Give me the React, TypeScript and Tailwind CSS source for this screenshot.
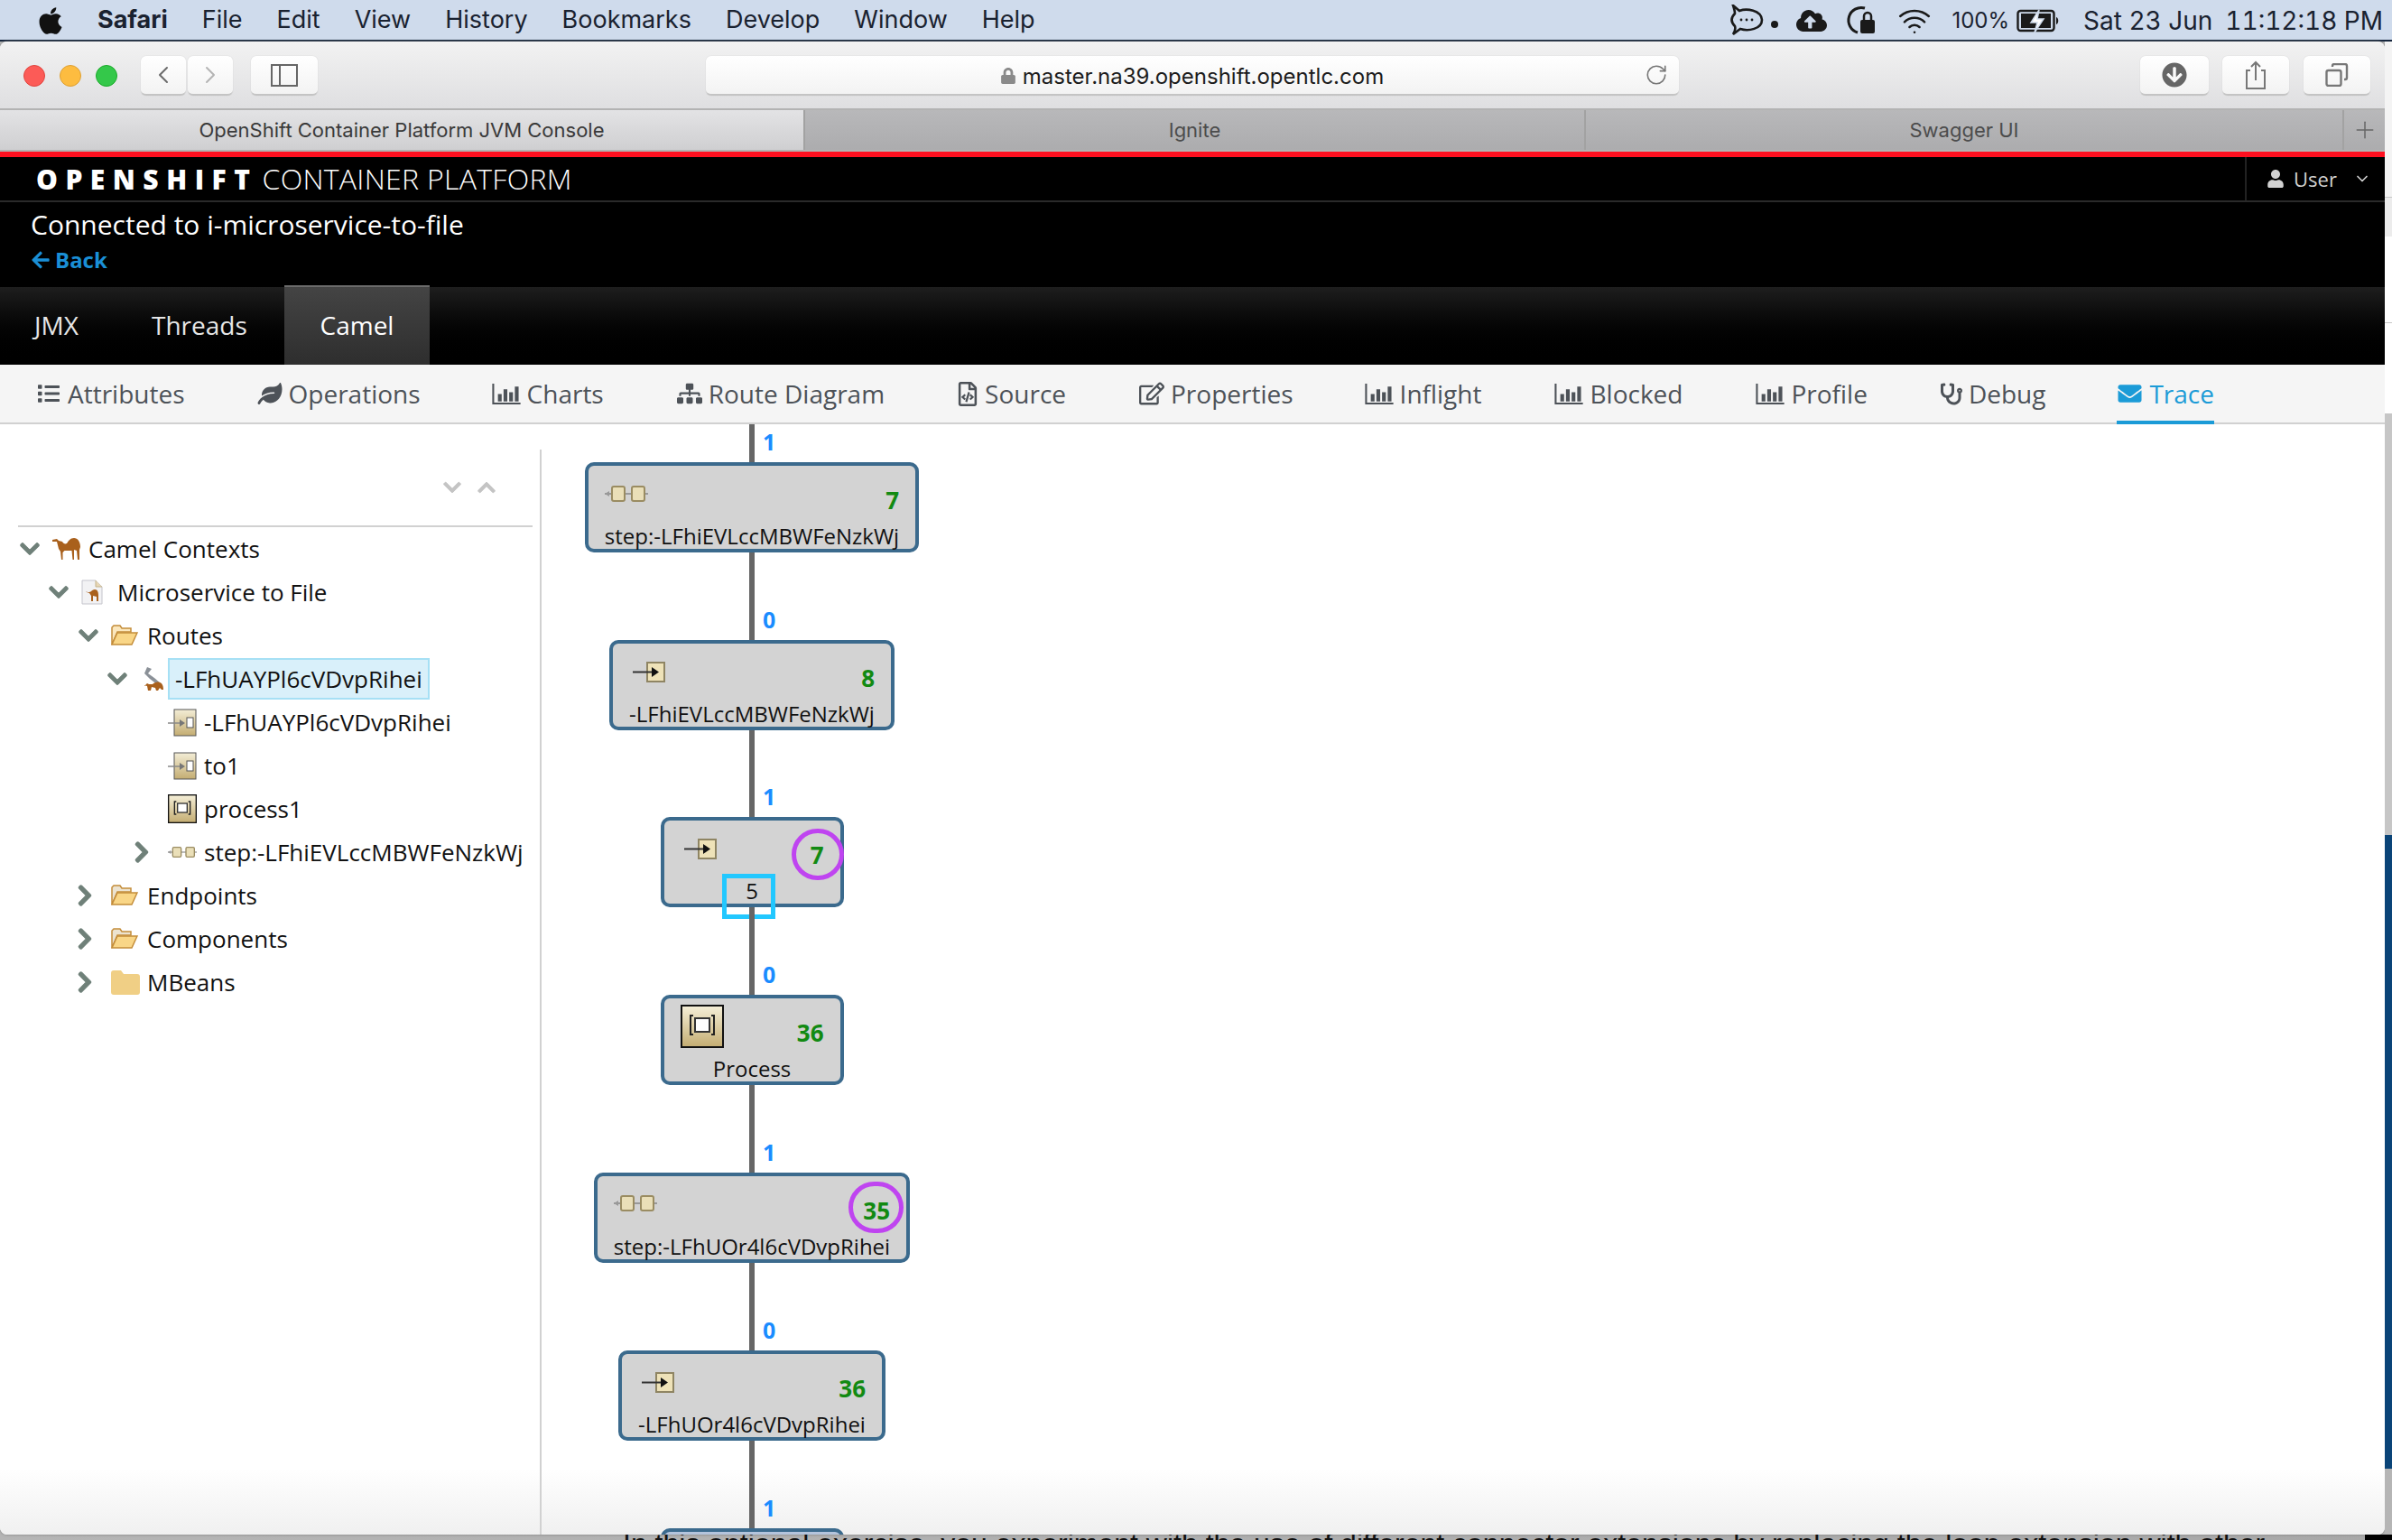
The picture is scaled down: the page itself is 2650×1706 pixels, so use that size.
import { FaApple, FaArrowCircleDown, FaArrowLeft, FaChevronDown, FaChevronRight, FaChevronUp, FaCloudUploadAlt, FaEnvelope, FaLeaf, FaList, FaLock, FaRegEdit, FaRegFileCode, FaSitemap, FaStethoscope, FaUser } from 'react-icons/fa';
import { ChevronDown, ChevronLeft, ChevronRight, Plus, RotateCw, Wifi } from 'lucide-react';
import type { ReactNode } from 'react';

const menuItems = ['File', 'Edit', 'View', 'History', 'Bookmarks', 'Develop', 'Window', 'Help'];

function BarIcon() {
  return (
    <svg width="32" height="25" viewBox="0 0 30 24" fill="currentColor">
      <path d="M0 1h2v20h28v2H0z" />
      <path d="M6 12h4v8H6zM12 7h4v13h-4zM18 10h4v10h-4zM24 4h4v16h-4z" />
    </svg>
  );
}

function StepIcon({ width = 48, height = 20 }: { width?: number; height?: number }) {
  return (
    <svg width={width} height={height} viewBox="0 0 48 20">
      <path d="M0 10h48" stroke="#999" strokeWidth="2" />
      <path d="M0 10l5-3v6z" fill="#999" />
      <rect x="8" y="2" width="14" height="16" rx="2" fill="#eadfb8" stroke="#9a8c62" strokeWidth="2" />
      <rect x="30" y="2" width="14" height="16" rx="2" fill="#eadfb8" stroke="#9a8c62" strokeWidth="2" />
    </svg>
  );
}

function EndpointIcon() {
  return (
    <svg width="36" height="23" viewBox="0 0 36 23">
      <rect x="16" y="1" width="19" height="21" fill="#eee2b8" stroke="#8f8563" strokeWidth="2" />
      <path d="M0 11.5h22" stroke="#333" strokeWidth="2" />
      <path d="M21 6l8 5.5-8 5.5z" fill="#111" />
    </svg>
  );
}

function ProcessIcon({ size }: { size: number }) {
  return (
    <svg width={size} height={size} viewBox="0 0 48 48">
      <defs>
        <linearGradient id="processFill" x1="0" y1="0" x2="0" y2="1">
          <stop offset="0" stopColor="#f5efd8" />
          <stop offset="1" stopColor="#c4ad72" />
        </linearGradient>
      </defs>
      <rect x="1" y="1" width="46" height="46" fill="url(#processFill)" stroke="#111" strokeWidth="2" />
      <path d="M14 12h-3v21h3M34 12h3v21h-3" fill="none" stroke="#222" strokeWidth="2" />
      <rect x="16" y="15" width="16" height="15" fill="#fff" stroke="#333" strokeWidth="2" />
    </svg>
  );
}

function TreeEndpointIcon() {
  return (
    <svg width="32" height="31" viewBox="0 0 32 31">
      <defs>
        <linearGradient id="treeFill" x1="0" y1="0" x2="0" y2="1">
          <stop offset="0" stopColor="#f3edd6" />
          <stop offset="1" stopColor="#c4ad72" />
        </linearGradient>
      </defs>
      <rect x="7" y="1" width="24" height="29" fill="url(#treeFill)" stroke="#555" />
      <rect x="21" y="10" width="7" height="11" fill="#fff" stroke="#555" />
      <path d="M0 16h14" stroke="#888" strokeWidth="1.5" />
      <path d="M13 12l6 4-6 4z" fill="#777" />
    </svg>
  );
}

function CamelIcon() {
  return (
    <svg width="32" height="24" viewBox="0 0 32 24" fill="#a9601c">
      <path d="M0 2l5-1 2 2 4 1c1 2 3 3 5 2 2-3 4-6 8-6s7 4 7 10l-1 3v11h-2l-1-10-3-1v11h-1.5l-1-10h-8l-2 2v8h-1.5l-1-9-2-3-2-8H3L0 4z" />
    </svg>
  );
}

function CamelFileIcon() {
  return (
    <svg width="24" height="28" viewBox="0 0 24 28">
      <path d="M1 1h15l7 7v19H1z" fill="#f2f2f4" stroke="#c4c4cc" />
      <path d="M16 1v7h7" fill="#e8d7b5" stroke="#c4b48c" />
      <path d="M5 13l2 1h2c2 0 3-3 6-3s4 3 4 6v7h-2v-5l-4-1v6h-2v-6l-2-3-3-1z" fill="#a9601c" />
    </svg>
  );
}

function RouteIcon() {
  return (
    <svg width="28" height="28" viewBox="0 0 28 28">
      <path d="M8 1l5 2-4 5 7 5 7 6-3 2-9-7-6-6z" fill="#8b9198" />
      <path d="M5 22l3-3 2 1h4c2-2 5-3 8-2s4 4 4 8h-2l-2-2-2 3h-2l-1-3-4-1-1 4H9l-1-5-3-1z" fill="#a9601c" />
    </svg>
  );
}

function FolderOpenIcon({ muted }: { muted?: boolean }) {
  return (
    <svg width="30" height="24" viewBox="0 0 30 24">
      <path d="M1 22V3l2-2h7l2 3h10v4H7z" fill={muted ? '#ece3d0' : '#fbe7bd'} stroke="#c48d3a" strokeWidth="1.5" />
      <path d="M1 22L7 9h22l-6 13z" fill="#f9d687" stroke="#c48d3a" strokeWidth="1.5" />
    </svg>
  );
}

function FolderIcon() {
  return (
    <svg width="32" height="27" viewBox="0 0 32 27" fill="#f0cf85">
      <path d="M0 3a3 3 0 013-3h8l3 4h15a3 3 0 013 3v17a3 3 0 01-3 3H3a3 3 0 01-3-3z" />
    </svg>
  );
}

function RocketChatIcon() {
  return (
    <svg width="38" height="36" viewBox="0 0 38 36" fill="none" stroke="#1a1a1a" strokeWidth="2.6">
      <path d="M4 1l7 6c8-3 24-1 25 10 0 10-15 13-24 10l-8 6c2-3 3-6 2-9-5-5-4-10 0-14 0-3-1-6-2-9z" />
      <circle cx="13" cy="17" r="1.4" fill="#1a1a1a" stroke="none" />
      <circle cx="19" cy="17" r="1.4" fill="#1a1a1a" stroke="none" />
      <circle cx="25" cy="17" r="1.4" fill="#1a1a1a" stroke="none" />
    </svg>
  );
}

function TimeMachineLockIcon() {
  return (
    <svg width="36" height="36" viewBox="0 0 36 36" fill="none">
      <path d="M22 4A14 14 0 1014 31" stroke="#1a1a1a" strokeWidth="3" />
      <rect x="17" y="17" width="16" height="15" rx="2" fill="#1a1a1a" />
      <path d="M21 18v-5a4 4 0 018 0v5" stroke="#1a1a1a" strokeWidth="2.5" />
    </svg>
  );
}

function BatteryIcon() {
  return (
    <svg width="48" height="26" viewBox="0 0 48 26">
      <rect x="1.5" y="2" width="40" height="22" rx="3" fill="none" stroke="#1a1a1a" strokeWidth="2.4" />
      <rect x="5" y="5" width="33" height="16" fill="#1a1a1a" />
      <path d="M44 9c3 1 3 7 0 8z" fill="#1a1a1a" />
      <path d="M25 1l-9 14h7l-3 11 10-15h-7z" fill="#fff" stroke="#cfdbec" strokeWidth="1.5" />
    </svg>
  );
}

function ToolButton({ className, children }: { className: string; children: ReactNode }) {
  return (
    <div className={`flex h-[44px] items-center justify-center rounded-[6px] border-b-2 border-[#c4c4c4] bg-gradient-to-b from-white to-[#f3f3f3] text-[#6b6b6b] shadow-[0_0_1px_#bbb] ${className}`}>
      {children}
    </div>
  );
}

function MenuBar() {
  return (
    <div className="flex h-[46px] items-center border-b-2 border-[#16263d] bg-[#cfdbec] pt-[1px] text-[27px] text-[#1a2230] font-['Inter',sans-serif]">
      <FaApple className="ml-[42px] h-[34px] w-[28px] text-[#111]" />
      <span className="ml-[38px] font-bold">Safari</span>
      <div className="ml-[38px] flex gap-[38px]">
        {menuItems.map((m) => (
          <span key={m}>{m}</span>
        ))}
      </div>
      <div className="ml-auto flex items-center pr-[10px]">
        <RocketChatIcon />
        <span className="ml-[8px] mt-[8px] h-[8px] w-[8px] rounded-full bg-[#1a1a1a]" />
        <FaCloudUploadAlt className="ml-[20px] h-[32px] w-[34px] text-[#1a1a1a]" />
        <span className="ml-[20px]"><TimeMachineLockIcon /></span>
        <Wifi className="ml-[20px] h-[38px] w-[42px] text-[#1a1a1a]" strokeWidth={1.6} />
        <span className="ml-[20px] text-[24px]">100%</span>
        <span className="ml-[8px]"><BatteryIcon /></span>
        <span className="ml-[26px] text-[28px] tabular-nums">Sat 23 Jun</span>
        <span className="ml-[14px] text-[28px] tabular-nums">11:12:18 PM</span>
      </div>
    </div>
  );
}

function Toolbar() {
  return (
    <div className="flex h-[74px] items-center bg-gradient-to-b from-[#f2f2f2] to-[#dfdfe1] pt-[2px]">
      <div className="ml-[26px] flex gap-[16px]">
        <span className="h-[24px] w-[24px] rounded-full border border-[#e0443e] bg-[#fc5b57]" />
        <span className="h-[24px] w-[24px] rounded-full border border-[#dea034] bg-[#fdbc40]" />
        <span className="h-[24px] w-[24px] rounded-full border border-[#1aab29] bg-[#34c84a]" />
      </div>
      <div className="ml-[26px] flex gap-[2px]">
        <ToolButton className="w-[50px]"><ChevronLeft className="h-[36px] w-[32px]" strokeWidth={1.5} /></ToolButton>
        <ToolButton className="w-[50px]"><ChevronRight className="h-[36px] w-[32px] text-[#b4b4b4]" strokeWidth={1.5} /></ToolButton>
      </div>
      <ToolButton className="ml-[20px] w-[74px]">
        <svg width="30" height="25" viewBox="0 0 30 25" fill="none" stroke="#666" strokeWidth="2">
          <rect x="1" y="1" width="28" height="23" />
          <path d="M10 1v23" />
        </svg>
      </ToolButton>
      <ToolButton className="relative ml-[430px] w-[1078px]">
        <FaLock className="mr-[8px] mt-[2px] h-[18px] w-[16px] text-[#8a8a8a]" />
        <span className="mt-[3px] text-[24px] text-[#1c1c1c] font-['Inter',sans-serif]">master.na39.openshift.opentlc.com</span>
        <RotateCw className="absolute right-[12px] h-[26px] w-[26px] text-[#777]" strokeWidth={1.5} />
      </ToolButton>
      <ToolButton className="ml-[511px] w-[76px]"><FaArrowCircleDown className="h-[28px] w-[28px] text-[#666]" /></ToolButton>
      <ToolButton className="ml-[15px] w-[74px]">
        <svg width="24" height="32" viewBox="0 0 24 32" fill="none" stroke="#777" strokeWidth="2">
          <path d="M6 11H2v20h20V11h-4M12 22V2M7 7l5-5 5 5" />
        </svg>
      </ToolButton>
      <ToolButton className="ml-[16px] w-[74px]">
        <svg width="26" height="26" viewBox="0 0 26 26" fill="none" stroke="#777" strokeWidth="2.4">
          <rect x="1.5" y="8" width="16" height="17" rx="2" />
          <path d="M8 4V3a2 2 0 012-2h12a2 2 0 012 2v13a2 2 0 01-2 2h-1" />
        </svg>
      </ToolButton>
    </div>
  );
}

function TabStrip() {
  return (
    <div className="flex h-[48px] border-y-2 border-[#b3b3b3] text-[22px] font-['Inter',sans-serif]">
      <div className="flex w-[890px] items-center justify-center bg-gradient-to-b from-[#e3e3e5] to-[#cfcfd1] text-[#3a3a3a]">OpenShift Container Platform JVM Console</div>
      <div className="flex w-[865px] items-center justify-center border-l-2 border-[#a2a2a2] bg-gradient-to-b from-[#b8b8ba] to-[#acacae] text-[#4c4c4c]">Ignite</div>
      <div className="flex w-[840px] items-center justify-center border-l-2 border-[#a2a2a2] bg-gradient-to-b from-[#b8b8ba] to-[#acacae] text-[#4c4c4c]">Swagger UI</div>
      <div className="flex w-[47px] items-center justify-center border-l-2 border-[#a2a2a2] bg-gradient-to-b from-[#b8b8ba] to-[#acacae] text-[#666]">
        <Plus className="h-[30px] w-[30px]" strokeWidth={1.2} />
      </div>
    </div>
  );
}

function ConsoleHeader() {
  return (
    <div className="bg-black text-white font-['Open_Sans',sans-serif]">
      <div className="flex h-[6px] bg-[#ff1020]" />
      <div className="flex h-[50px] items-center border-b-2 border-[#2a2a2a]">
        <span className="ml-[40px] text-[30px] font-extrabold tracking-[8.5px]">OPENSHIFT</span>
        <span className="ml-[5px] text-[32px] font-light tracking-[0.3px]">CONTAINER PLATFORM</span>
        <div className="ml-auto flex h-full w-[155px] items-center gap-[10px] border-l-2 border-[#222] pl-[22px] text-[22px] text-[#d1d1d1]">
          <FaUser className="h-[20px] w-[20px]" />
          <span>User</span>
          <ChevronDown className="ml-[8px] h-[20px] w-[20px]" strokeWidth={2} />
        </div>
      </div>
      <div className="h-[94px] pl-[34px] pt-[2px]">
        <div className="text-[30px] leading-[46px]">Connected to i-microservice-to-file</div>
        <div className="flex items-center gap-[5px] text-[24px] font-bold leading-[32px] text-[#1a8fd6]">
          <FaArrowLeft className="h-[22px] w-[22px]" />
          <span>Back</span>
        </div>
      </div>
      <div className="flex h-[86px] bg-gradient-to-b from-[#1e1e1e] to-black pb-[2px] text-[28px] text-[#e6e6e6]">
        <div className="flex w-[145px] items-center pl-[38px]">JMX</div>
        <div className="flex w-[170px] items-center pl-[23px]">Threads</div>
        <div className="-mb-[2px] -mt-[2px] flex w-[161px] items-center justify-center border-t-2 border-[#6b6b6b] bg-gradient-to-b from-[#444] to-[#2e2e2e] pb-[2px] text-white">Camel</div>
      </div>
    </div>
  );
}

const subTabs: { label: string; icon: ReactNode; className: string }[] = [
  { label: 'Attributes', icon: <FaList className="h-[24px] w-[28px]" />, className: 'ml-[40px]' },
  { label: 'Operations', icon: <FaLeaf className="h-[24px] w-[28px]" />, className: 'ml-[80px]' },
  { label: 'Charts', icon: <BarIcon />, className: 'ml-[79px]' },
  { label: 'Route Diagram', icon: <FaSitemap className="h-[26px] w-[28px]" />, className: 'ml-[81px]' },
  { label: 'Source', icon: <FaRegFileCode className="h-[27px] w-[24px]" />, className: 'ml-[80px]' },
  { label: 'Properties', icon: <FaRegEdit className="h-[26px] w-[28px]" />, className: 'ml-[81px]' },
  { label: 'Inflight', icon: <BarIcon />, className: 'ml-[79px]' },
  { label: 'Blocked', icon: <BarIcon />, className: 'ml-[81px]' },
  { label: 'Profile', icon: <BarIcon />, className: 'ml-[81px]' },
  { label: 'Debug', icon: <FaStethoscope className="h-[25px] w-[24px]" />, className: 'ml-[81px]' },
];

function SubNav() {
  return (
    <div className="flex h-[66px] border-b-2 border-[#d1d1d1] bg-[#f5f5f5] text-[28px] text-[#4d5258] font-['Open_Sans',sans-serif]">
      {subTabs.map((t) => (
        <div key={t.label} className={`flex items-center gap-[7px] ${t.className}`}>
          {t.icon}
          <span>{t.label}</span>
        </div>
      ))}
      <div className="relative ml-[79px] flex items-center gap-[7px] text-[#1b9bd7]">
        <FaEnvelope className="h-[26px] w-[29px]" />
        <span>Trace</span>
        <div className="absolute -bottom-[2px] left-0 h-[4px] w-full bg-[#1b9bd7]" />
      </div>
    </div>
  );
}

type TreeRowProps = { indent: string; chevron?: 'down' | 'right'; icon: ReactNode; label: string; selected?: boolean };

function TreeRow({ indent, chevron, icon, label, selected }: TreeRowProps) {
  return (
    <div className={`flex h-[48px] items-center ${indent}`}>
      <div className="flex w-[38px] items-center text-[#6f8079]">
        {chevron === 'down' && <FaChevronDown className="h-[24px] w-[26px] stroke-[24px]" />}
        {chevron === 'right' && <FaChevronRight className="h-[26px] w-[18px] stroke-[24px]" />}
      </div>
      {selected ? (
        <>
          <div className="flex w-[31px] items-center">{icon}</div>
          <div className="flex h-[46px] items-center border-2 border-[#a6e0f5] bg-[#d9f0fa] px-[6px]">{label}</div>
        </>
      ) : (
        <>
          <div className="flex w-[40px] items-center">{icon}</div>
          <div>{label}</div>
        </>
      )}
    </div>
  );
}

function Sidebar() {
  return (
    <div className="mt-[28px] w-[600px] shrink-0 border-r-2 border-[#d1d1d1] text-[26px] text-[#111] font-['Open_Sans',sans-serif]">
      <div className="ml-[20px] mr-[8px] flex h-[86px] items-center justify-end gap-[16px] border-b-2 border-[#d1d1d1] pr-[40px] text-[#c4c4c4]">
        <FaChevronDown className="h-[22px] w-[22px] stroke-[20px]" />
        <FaChevronUp className="h-[22px] w-[22px] stroke-[20px]" />
      </div>
      <TreeRow indent="pl-[20px]" chevron="down" icon={<CamelIcon />} label="Camel Contexts" />
      <TreeRow indent="pl-[52px]" chevron="down" icon={<CamelFileIcon />} label="Microservice to File" />
      <TreeRow indent="pl-[85px]" chevron="down" icon={<FolderOpenIcon />} label="Routes" />
      <TreeRow indent="pl-[117px]" chevron="down" icon={<RouteIcon />} label="-LFhUAYPl6cVDvpRihei" selected />
      <TreeRow indent="pl-[148px]" icon={<TreeEndpointIcon />} label="-LFhUAYPl6cVDvpRihei" />
      <TreeRow indent="pl-[148px]" icon={<TreeEndpointIcon />} label="to1" />
      <TreeRow indent="pl-[148px]" icon={<ProcessIcon size={32} />} label="process1" />
      <TreeRow indent="pl-[148px]" chevron="right" icon={<StepIcon width={32} height={14} />} label="step:-LFhiEVLccMBWFeNzkWj" />
      <TreeRow indent="pl-[85px]" chevron="right" icon={<FolderOpenIcon muted />} label="Endpoints" />
      <TreeRow indent="pl-[85px]" chevron="right" icon={<FolderOpenIcon muted />} label="Components" />
      <TreeRow indent="pl-[85px]" chevron="right" icon={<FolderIcon />} label="MBeans" />
    </div>
  );
}

function Connector({ value, className }: { value: string; className: string }) {
  return (
    <div className={`relative w-[6px] shrink-0 bg-[#666] ${className}`}>
      <span className="absolute bottom-[6px] left-[15px] text-[25px] font-bold leading-[34px] text-[#1a8cff]">{value}</span>
    </div>
  );
}

type NodeProps = { icon?: ReactNode; iconTop?: string; count?: string; label?: string; width: string; circle?: string; outlined?: boolean; fill?: string };

function RouteNode({ icon, iconTop, count, label, width, circle, outlined, fill = 'bg-[#d3d3d3]' }: NodeProps) {
  return (
    <div className={`relative h-[100px] shrink-0 rounded-[10px] border-4 border-[#3b6a8d] ${fill} ${width}`}>
      <div className="flex h-[61px] items-start justify-between px-[18px]">
        <div className={iconTop}>{icon}</div>
        <div className="mt-[22px] text-[26px] font-bold leading-[32px] text-[#128a12]">{count}</div>
      </div>
      <div className="whitespace-nowrap text-center text-[24px] leading-[34px] text-[#111]">{label}</div>
      {circle && <div className={`absolute rounded-full border-[5px] border-[#bf44f0] ${circle}`} />}
      {outlined && <div className="absolute left-[64px] top-[59px] h-[50px] w-[59px] border-[5px] border-[#22c8ff]" />}
    </div>
  );
}

function Diagram() {
  return (
    <div className="flex w-[466px] flex-col items-center font-['Open_Sans',sans-serif]">
      <Connector value="1" className="h-[42px]" />
      <RouteNode icon={<StepIcon />} iconTop="mt-[21px]" count="7" label="step:-LFhiEVLccMBWFeNzkWj" width="w-[370px]" />
      <Connector value="0" className="h-[97px]" />
      <RouteNode icon={<EndpointIcon />} iconTop="ml-[4px] mt-[20px]" count="8" label="-LFhiEVLccMBWFeNzkWj" width="w-[316px]" />
      <Connector value="1" className="h-[96px]" />
      <RouteNode icon={<EndpointIcon />} iconTop="ml-[4px] mt-[20px]" count="7" label="5" width="w-[203px]" circle="-right-[4px] top-[9px] h-[57px] w-[58px]" outlined />
      <Connector value="0" className="h-[97px]" />
      <RouteNode icon={<ProcessIcon size={48} />} iconTop="mt-[7px]" count="36" label="Process" width="w-[203px]" />
      <Connector value="1" className="h-[97px]" />
      <RouteNode icon={<StepIcon />} iconTop="mt-[20px]" count="35" label="step:-LFhUOr4l6cVDvpRihei" width="w-[350px]" circle="right-[3px] top-[6px] h-[57px] w-[61px]" />
      <Connector value="0" className="h-[97px]" />
      <RouteNode icon={<EndpointIcon />} iconTop="ml-[4px] mt-[20px]" count="36" label="-LFhUOr4l6cVDvpRihei" width="w-[296px]" />
      <Connector value="1" className="h-[97px]" />
      <RouteNode width="w-[203px]" fill="bg-[#b4c4dc]" />
    </div>
  );
}

function EdgeStrip() {
  return (
    <div className="flex w-[8px] flex-col overflow-hidden">
      <div className="h-[172px] bg-[#f4f4f4]" />
      <div className="h-[44px] border-t border-[#c8c8c8] bg-[#ececec]" />
      <div className="h-[96px] border-b border-[#c8c8c8] bg-white" />
      <div className="h-[100px] bg-white" />
      <div className="h-[467px] bg-[#c6c6c6]" />
      <div className="h-[702px] bg-[#0a4478]" />
      <div className="h-[73px] bg-[#b5b5b5]" />
    </div>
  );
}

export default function App() {
  return (
    <div className="h-[1706px] w-[2650px] overflow-hidden bg-[#b5b5b5]">
      <MenuBar />
      <div className="flex h-[1654px]">
        <div className="flex w-[2642px] flex-col overflow-hidden rounded-[8px] bg-white shadow-[0_0_3px_#777]">
          <Toolbar />
          <TabStrip />
          <ConsoleHeader />
          <SubNav />
          <div className="flex min-h-0 flex-1 overflow-hidden bg-gradient-to-b from-white from-[94%] to-[#f0f0f0]">
            <Sidebar />
            <Diagram />
          </div>
        </div>
        <EdgeStrip />
      </div>
      <div className="flex h-[6px] overflow-hidden bg-gradient-to-r from-[#b5b5b5] to-[#a8a8a8]">
        <div className="-mt-[6px] ml-[690px] whitespace-nowrap text-[32px] leading-[32px] text-[#111] font-['Liberation_Sans',sans-serif]">
          In this optional exercise, you experiment with the use of different connector extensions by replacing the loop extension with other
        </div>
        <div className="ml-auto h-full w-[30px] shrink-0 bg-black" />
      </div>
    </div>
  );
}
